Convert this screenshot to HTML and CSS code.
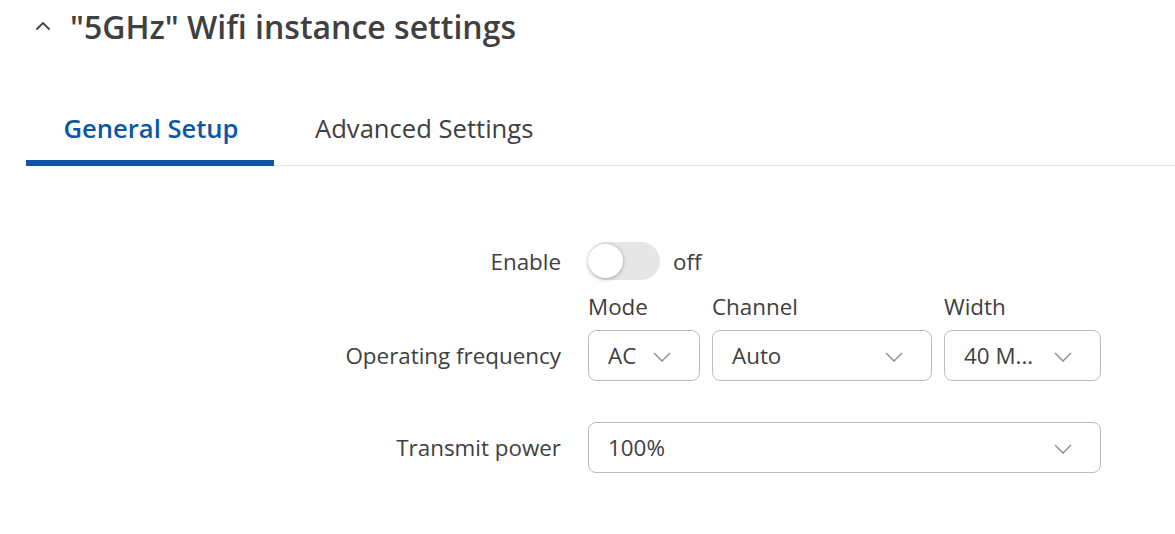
FILE: index.html
```html
<!DOCTYPE html>
<html lang="en">
<head>
<meta charset="utf-8">
<title>5GHz Wifi instance settings</title>
<link rel="stylesheet" href="styles.css">
</head>
<body>
<div class="page">
  <div class="header">
    <svg class="chev-up" width="16" height="10" viewBox="0 0 16 10"><path d="M1.5 8.5 L8 2 L14.5 8.5" fill="none" stroke="#404040" stroke-width="1.8"/></svg>
    <h1 class="title">"5GHz" Wifi instance settings</h1>
  </div>

  <div class="tabs">
    <div class="tab active">General Setup</div>
    <div class="tab">Advanced Settings</div>
    <div class="tab-rest"></div>
  </div>

  <div class="form">
    <div class="row row-enable">
      <div class="label">Enable</div>
      <div class="control toggle-wrap">
        <div class="toggle"><div class="knob"></div></div>
        <span class="toggle-text">off</span>
      </div>
    </div>

    <div class="row row-freq">
      <div class="label label-bottom">Operating frequency</div>
      <div class="control fields">
        <div class="field f-mode">
          <div class="sublabel">Mode</div>
          <div class="select"><span class="val">AC</span><svg class="chev" width="18" height="10" viewBox="0 0 18 10"><path d="M1 1 L9 9 L17 1" fill="none" stroke="#8a8a8a" stroke-width="1.3"/></svg></div>
        </div>
        <div class="field f-channel">
          <div class="sublabel">Channel</div>
          <div class="select"><span class="val">Auto</span><svg class="chev" width="18" height="10" viewBox="0 0 18 10"><path d="M1 1 L9 9 L17 1" fill="none" stroke="#8a8a8a" stroke-width="1.3"/></svg></div>
        </div>
        <div class="field f-width">
          <div class="sublabel">Width</div>
          <div class="select"><span class="val">40 M...</span><svg class="chev" width="18" height="10" viewBox="0 0 18 10"><path d="M1 1 L9 9 L17 1" fill="none" stroke="#8a8a8a" stroke-width="1.3"/></svg></div>
        </div>
      </div>
    </div>

    <div class="row row-power">
      <div class="label">Transmit power</div>
      <div class="control">
        <div class="select select-wide"><span class="val">100%</span><svg class="chev" width="18" height="10" viewBox="0 0 18 10"><path d="M1 1 L9 9 L17 1" fill="none" stroke="#8a8a8a" stroke-width="1.3"/></svg></div>
      </div>
    </div>
  </div>
</div>
</body>
</html>
```

FILE: styles.css
```css
* { box-sizing: border-box; }

html, body {
  margin: 0;
  padding: 0;
  background: #ffffff;
}

body {
  font-family: "Open Sans", "Noto Sans", "Liberation Sans", sans-serif;
  color: #404040;
  width: 1175px;
  height: 534px;
  overflow: hidden;
}

.header {
  display: flex;
  align-items: center;
  height: 54px;
  padding-left: 35px;
}

.chev-up {
  display: block;
  margin-right: 19px;
  margin-top: -2px;
}

.title {
  margin: 0;
  font-size: 32px;
  font-weight: 600;
  line-height: 40px;
  color: #404040;
}

.tabs {
  display: flex;
  margin-top: 45px;
  margin-left: 26px;
  height: 67px;
}

.tab {
  font-size: 25.6px;
  line-height: 59px;
  padding: 0 38px 0 41px;
  color: #404040;
  border-bottom: 1px solid #e3e3e3;
}

.tab.active {
  color: #0c56a4;
  font-weight: 600;
  width: 248px;
  text-align: center;
  padding: 0 0 0 2px;
  border-bottom: 6px solid #0c56a4;
  line-height: 60px;
}

.tab-rest {
  flex: 1;
  border-bottom: 1px solid #e3e3e3;
}

.form {
  margin-top: 76px;
}

.row {
  display: grid;
  grid-template-columns: 561px 513px;
  column-gap: 27px;
}

.label {
  text-align: right;
  font-size: 22.4px;
  color: #404040;
  align-self: center;
}

.label-bottom {
  align-self: end;
  line-height: 51px;
}

.toggle-wrap {
  display: flex;
  align-items: center;
  height: 38px;
}

.toggle {
  position: relative;
  width: 72px;
  height: 38px;
  border-radius: 19px;
  background: #e6e6e6;
}

.knob {
  position: absolute;
  left: 0;
  top: 2px;
  width: 35px;
  height: 34px;
  border-radius: 50%;
  background: #ffffff;
  box-shadow: 0 1px 4px rgba(0, 0, 0, 0.3);
}

.toggle-text {
  font-size: 22.4px;
  margin-left: 13px;
  color: #404040;
}

.row-freq {
  margin-top: 13px;
}

.fields {
  display: flex;
  gap: 12px;
}

.field {
  display: flex;
  flex-direction: column;
}

.sublabel {
  font-size: 22.4px;
  line-height: 28px;
  margin-bottom: 9px;
  color: #404040;
}

.select {
  display: flex;
  align-items: center;
  justify-content: space-between;
  height: 51px;
  border: 1px solid #bdbdbd;
  border-radius: 8px;
  padding: 0 28px 0 19px;
  font-size: 22.4px;
  color: #404040;
}

.chev {
  display: block;
  margin-top: 2px;
}

.f-mode .select { width: 112px; padding-right: 28px; }
.f-channel .select { width: 220px; }
.f-width .select { width: 157px; }

.row-power {
  margin-top: 41px;
}

.select-wide {
  width: 513px;
}
```
